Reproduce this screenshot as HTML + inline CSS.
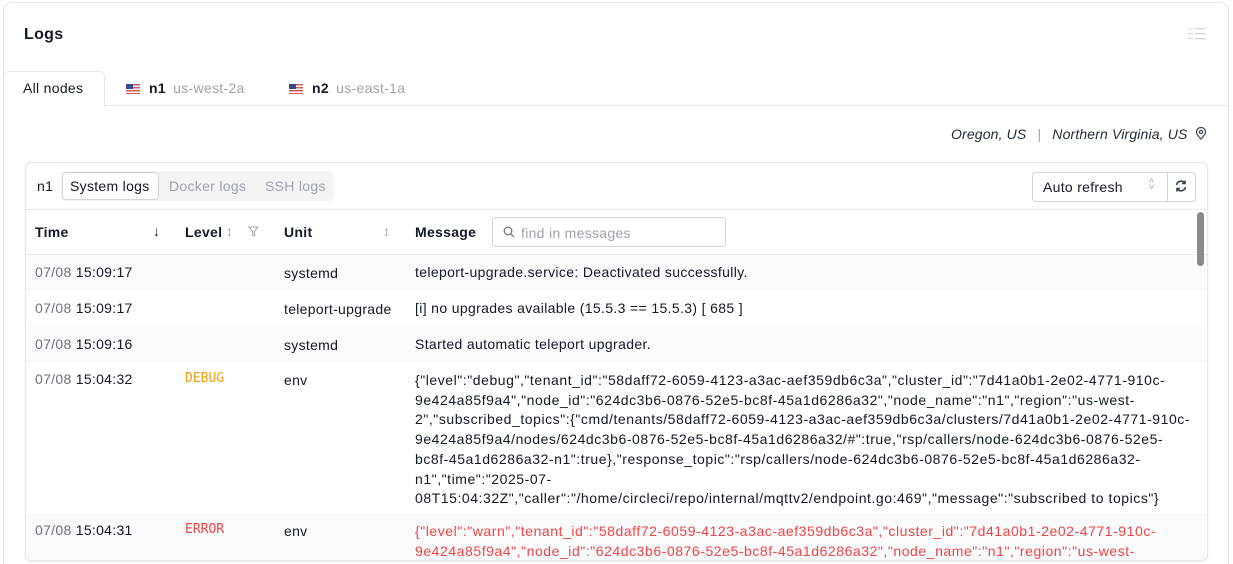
<!DOCTYPE html>
<html><head><meta charset="utf-8"><style>
*{box-sizing:border-box;margin:0;padding:0}
html,body{width:1233px;height:564px;overflow:hidden}
body{background:#fff;font-family:"Liberation Sans",sans-serif;color:#111827;font-size:14px;letter-spacing:0.3px}
#w{position:relative;width:1233px;height:564px;overflow:hidden}
.a{position:absolute;white-space:nowrap}
.card{position:absolute;left:3px;top:2px;width:1226px;height:562px;border:1px solid #e5e7eb;border-bottom:none;border-radius:9px 9px 0 0}
.inner{position:absolute;left:25px;top:162px;width:1183px;height:399px;border:1px solid #e5e7eb;border-radius:6px;overflow:hidden;box-shadow:0 1px 2px rgba(0,0,0,.08)}
.g{color:#6b7280}
.row{position:absolute;left:0;width:1181px}
.mono{font-family:"DejaVu Sans Mono","Liberation Mono",monospace;font-size:13px;letter-spacing:0}
.flag{display:inline-block;width:14px;height:10px;vertical-align:-1px;background:repeating-linear-gradient(#d45a5a 0 1.5px,#fff 1.5px 3px);position:relative;margin-right:9px}
.flag:before{content:"";position:absolute;left:0;top:0;width:7px;height:5px;background:#3b4a8a}
.msg{letter-spacing:0.55px}
</style></head><body><div id="w">
<div class="card"></div>
<div class="a" style="left:24px;top:26px;font-size:16px;font-weight:bold">Logs</div>
<svg class="a" style="left:1188px;top:27px" width="18" height="14" viewBox="0 0 18 14" fill="#d1d5db"><rect x="0" y="1" width="2" height="1.3"/><rect x="3" y="1" width="2" height="1.3"/><rect x="7" y="1" width="11" height="1.3"/><rect x="0" y="6" width="2" height="1.3"/><rect x="3" y="6" width="2" height="1.3"/><rect x="7" y="6" width="11" height="1.3"/><rect x="0" y="11" width="2" height="1.3"/><rect x="3" y="11" width="2" height="1.3"/><rect x="7" y="11" width="11" height="1.3"/></svg>
<div class="a" style="left:3px;top:105px;width:1226px;border-top:1px solid #e5e7eb"></div>
<div class="a" style="left:3px;top:71px;width:102px;height:35px;border:1px solid #e5e7eb;border-bottom:none;border-radius:6px 6px 0 0;background:#fff"></div>
<div class="a" style="left:23px;top:80px">All nodes</div>
<div class="a" style="left:126px;top:80px"><span class="flag"></span><span style="font-weight:bold">n1</span> <span style="color:#9ca3af;margin-left:3px">us-west-2a</span></div>
<div class="a" style="left:289px;top:80px"><span class="flag"></span><span style="font-weight:bold">n2</span> <span style="color:#9ca3af;margin-left:3px">us-east-1a</span></div>
<div class="a" style="left:951px;top:126px;font-style:italic;color:#1f2937;letter-spacing:0.15px">Oregon, US <span style="color:#9ca3af;font-style:normal;margin:0 7px">|</span> Northern Virginia, US</div>
<svg class="a" style="left:1195px;top:127px" width="12" height="13" viewBox="0 0 12 13" fill="none" stroke="#374151" stroke-width="1.2"><path d="M6 12C3 9 1.5 7 1.5 5a4.5 4.5 0 0 1 9 0c0 2-1.5 4-4.5 7z"/><circle cx="6" cy="5" r="1.6"/></svg>
<div class="inner">
<div class="a" style="left:11px;top:15px">n1</div>
<div class="a" style="left:35px;top:8px;width:273px;height:30px;background:#f3f4f6;border-radius:5px"></div>
<div class="a" style="left:36px;top:9px;width:97px;height:28px;background:#fff;border:1px solid #d1d5db;border-radius:4px"></div>
<div class="a" style="left:44px;top:15px">System logs</div>
<div class="a" style="left:143px;top:15px;color:#9ca3af">Docker logs</div>
<div class="a" style="left:239px;top:15px;color:#9ca3af">SSH logs</div>
<div class="a" style="left:1006px;top:9px;width:164px;height:30px;border:1px solid #d1d5db;border-radius:4px"></div>
<div class="a" style="left:1141px;top:9px;height:30px;border-left:1px solid #d1d5db"></div>
<div class="a" style="left:1017px;top:16px">Auto refresh</div>
<div class="a" style="left:1123px;top:15px;font-size:9px;color:#9ca3af;line-height:6px">˄<br>˅</div>
<svg class="a" style="left:1148px;top:16px" width="14" height="14" viewBox="0 0 14 14" fill="none" stroke="#374151" stroke-width="1.6"><path d="M2.5 6A4.6 4.6 0 0 1 11 4.5M11.5 8A4.6 4.6 0 0 1 3 9.5"/><path d="M11 1.5v3H8M3 12.5v-3h3"/></svg>
<div class="a" style="left:0;top:46px;width:1181px;border-top:1px solid #e5e7eb"></div>
<div class="a" style="left:9px;top:61px;font-weight:bold">Time</div>
<div class="a" style="left:127px;top:60px">↓</div>
<div class="a" style="left:159px;top:61px;font-weight:bold">Level</div>
<div class="a" style="left:200px;top:60px;color:#9ca3af">↕</div>
<svg class="a" style="left:222px;top:63px" width="11" height="11" viewBox="0 0 11 11" fill="none" stroke="#9ca3af"><path d="M1 1h9L6.5 5.5V10L4.5 9V5.5z"/></svg>
<div class="a" style="left:258px;top:61px;font-weight:bold">Unit</div>
<div class="a" style="left:357px;top:60px;color:#9ca3af">↕</div>
<div class="a" style="left:389px;top:61px;font-weight:bold">Message</div>
<div class="a" style="left:466px;top:54px;width:234px;height:30px;border:1px solid #d1d5db;border-radius:4px"></div>
<svg class="a" style="left:477px;top:63px" width="12" height="12" viewBox="0 0 12 12" fill="none" stroke="#6b7280" stroke-width="1.2"><circle cx="5" cy="5" r="3.8"/><path d="M8 8l3 3"/></svg>
<div class="a" style="left:495px;top:62px;color:#9ca3af">find in messages</div>
<div class="a" style="left:0;top:91px;width:1181px;border-top:1px solid #e5e7eb"></div>
<div class="row" style="top:92px;height:36px;background:#f9fafb"></div>
<div class="row" style="top:164px;height:36px;background:#f9fafb"></div>
<div class="row" style="top:350px;height:80px;background:#f9fafb"></div>
<div class="a" style="left:9px;top:101px"><span class="g">07/08</span> 15:09:17</div>
<div class="a" style="left:258px;top:102px">systemd</div>
<div class="a msg" style="left:389px;top:101px;letter-spacing:0.35px">teleport-upgrade.service: Deactivated successfully.</div>
<div class="a" style="left:9px;top:137px"><span class="g">07/08</span> 15:09:17</div>
<div class="a" style="left:258px;top:138px">teleport-upgrade</div>
<div class="a msg" style="left:389px;top:137px;letter-spacing:0.35px">[i] no upgrades available (15.5.3 == 15.5.3) [ 685 ]</div>
<div class="a" style="left:9px;top:173px"><span class="g">07/08</span> 15:09:16</div>
<div class="a" style="left:258px;top:174px">systemd</div>
<div class="a msg" style="left:389px;top:173px;letter-spacing:0.35px">Started automatic teleport upgrader.</div>
<div class="a" style="left:9px;top:208px"><span class="g">07/08</span> 15:04:32</div>
<div class="a mono" style="left:159px;top:208px;color:#f59e0b">DEBUG</div>
<div class="a" style="left:258px;top:209px">env</div>
<div class="a msg" style="left:389px;top:208px;line-height:19.7px">{"level":"debug","tenant_id":"58daff72-6059-4123-a3ac-aef359db6c3a","cluster_id":"7d41a0b1-2e02-4771-910c-<br>9e424a85f9a4","node_id":"624dc3b6-0876-52e5-bc8f-45a1d6286a32","node_name":"n1","region":"us-west-<br>2","subscribed_topics":{"cmd/tenants/58daff72-6059-4123-a3ac-aef359db6c3a/clusters/7d41a0b1-2e02-4771-910c-<br>9e424a85f9a4/nodes/624dc3b6-0876-52e5-bc8f-45a1d6286a32/#":true,"rsp/callers/node-624dc3b6-0876-52e5-<br>bc8f-45a1d6286a32-n1":true},"response_topic":"rsp/callers/node-624dc3b6-0876-52e5-bc8f-45a1d6286a32-<br>n1","time":"2025-07-<br>08T15:04:32Z","caller":"/home/circleci/repo/internal/mqttv2/endpoint.go:469","message":"subscribed to topics"}</div>
<div class="a" style="left:9px;top:359px"><span class="g">07/08</span> 15:04:31</div>
<div class="a mono" style="left:159px;top:359px;color:#ef4444">ERROR</div>
<div class="a" style="left:258px;top:360px">env</div>
<div class="a msg" style="left:389px;top:359px;line-height:19.7px;color:#ef4444">{"level":"warn","tenant_id":"58daff72-6059-4123-a3ac-aef359db6c3a","cluster_id":"7d41a0b1-2e02-4771-910c-<br>9e424a85f9a4","node_id":"624dc3b6-0876-52e5-bc8f-45a1d6286a32","node_name":"n1","region":"us-west-</div>
<div class="a" style="left:1171px;top:49px;width:7px;height:54px;background:#8a8a8a;border-radius:4px"></div>
</div>
</div></body></html>
